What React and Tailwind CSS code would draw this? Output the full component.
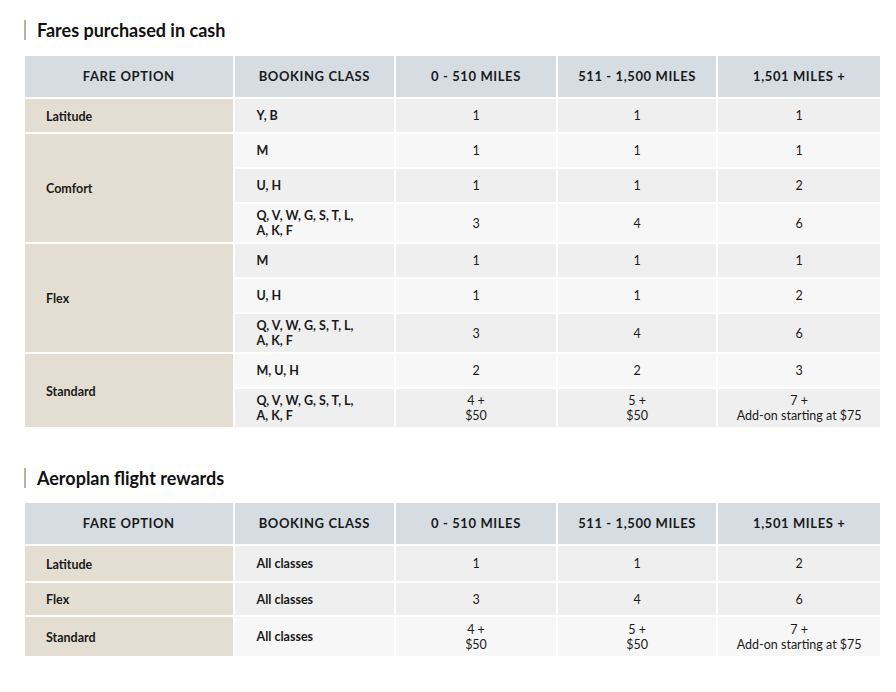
const cashRows = [
  {
    option: "Latitude",
    rows: [{ cls: ["Y, B"], a: ["1"], b: ["1"], c: ["1"] }],
  },
  {
    option: "Comfort",
    rows: [
      { cls: ["M"], a: ["1"], b: ["1"], c: ["1"] },
      { cls: ["U, H"], a: ["1"], b: ["1"], c: ["2"] },
      { cls: ["Q, V, W, G, S, T, L,", "A, K, F"], a: ["3"], b: ["4"], c: ["6"] },
    ],
  },
  {
    option: "Flex",
    rows: [
      { cls: ["M"], a: ["1"], b: ["1"], c: ["1"] },
      { cls: ["U, H"], a: ["1"], b: ["1"], c: ["2"] },
      { cls: ["Q, V, W, G, S, T, L,", "A, K, F"], a: ["3"], b: ["4"], c: ["6"] },
    ],
  },
  {
    option: "Standard",
    rows: [
      { cls: ["M, U, H"], a: ["2"], b: ["2"], c: ["3"] },
      {
        cls: ["Q, V, W, G, S, T, L,", "A, K, F"],
        a: ["4 +", "$50"],
        b: ["5 +", "$50"],
        c: ["7 +", "Add-on starting at $75"],
      },
    ],
  },
];

const rewardRows = [
  { option: "Latitude", rows: [{ cls: ["All classes"], a: ["1"], b: ["1"], c: ["2"], shade: "dark", h: "h-[37px]" }] },
  { option: "Flex", rows: [{ cls: ["All classes"], a: ["3"], b: ["4"], c: ["6"], shade: "dark", h: "h-[34px]" }] },
  {
    option: "Standard",
    rows: [
      {
        cls: ["All classes"],
        a: ["4 +", "$50"],
        b: ["5 +", "$50"],
        c: ["7 +", "Add-on starting at $75"],
        shade: "light",
        h: "h-[41px]",
      },
    ],
  },
];

function Lines({ lines }) {
  return lines.map((l, i) => (
    <div key={i} className="leading-[15px]">
      {l}
    </div>
  ));
}

function Heading({ children }) {
  return (
    <div className="flex items-center gap-[11px] pl-[24px]">
      <div className="w-[2px] h-[20px] bg-[#b9b1a6]"></div>
      <h2 className="text-[18px] font-bold text-[#111] leading-none">{children}</h2>
    </div>
  );
}

function FareTable({ groups, alternate }) {
  let idx = 0;
  const th = "border-2 border-white bg-[#d5dde3] text-[13px] font-bold tracking-[0.6px] text-[#1a1a1a] text-center h-[43px]";
  return (
    <table className="border-collapse ml-[23px] mr-[14px] table-fixed">
      <colgroup>
        <col className="w-[210px]" />
        <col className="w-[162px]" />
        <col className="w-[162px]" />
        <col className="w-[161px]" />
        <col className="w-[164px]" />
      </colgroup>
      <thead>
        <tr>
          <th className={th}>FARE OPTION</th>
          <th className={th}>BOOKING CLASS</th>
          <th className={th}>0 - 510 MILES</th>
          <th className={th}>511 - 1,500 MILES</th>
          <th className={th}>1,501 MILES +</th>
        </tr>
      </thead>
      <tbody>
        {groups.map((g) =>
          g.rows.map((r, i) => {
            const dark = alternate ? idx % 2 === 0 : r.shade === "dark";
            idx++;
            const bg = dark ? "bg-[#efefef]" : "bg-[#f7f7f7]";
            const two = r.cls.length > 1 || r.a.length > 1;
            const h = r.h || (two ? "h-[40px]" : "h-[35px]");
            const td = `border-2 border-white ${bg} ${h} text-[12.5px] text-[#1a1a1a] align-middle`;
            return (
              <tr key={g.option + i}>
                {i === 0 && (
                  <td
                    rowSpan={g.rows.length}
                    className="border-2 border-white bg-[#e4ddd1] text-[12.5px] font-bold text-[#1a1a1a] pl-[21px] pt-[3px] align-middle"
                  >
                    {g.option}
                  </td>
                )}
                <td className={`${td} font-bold pl-[22px]`}>
                  <Lines lines={r.cls} />
                </td>
                <td className={`${td} text-center`}>
                  <Lines lines={r.a} />
                </td>
                <td className={`${td} text-center`}>
                  <Lines lines={r.b} />
                </td>
                <td className={`${td} text-center`}>
                  <Lines lines={r.c} />
                </td>
              </tr>
            );
          })
        )}
      </tbody>
    </table>
  );
}

export default function App() {
  return (
    <div className="w-[896px] h-[692px] bg-white font-['Lato',sans-serif] pt-[20px]">
      <Heading>Fares purchased in cash</Heading>
      <div className="mt-[14px]">
        <FareTable groups={cashRows} alternate />
      </div>
      <div className="mt-[39px]">
        <Heading>Aeroplan flight rewards</Heading>
      </div>
      <div className="mt-[13px]">
        <FareTable groups={rewardRows} />
      </div>
    </div>
  );
}
